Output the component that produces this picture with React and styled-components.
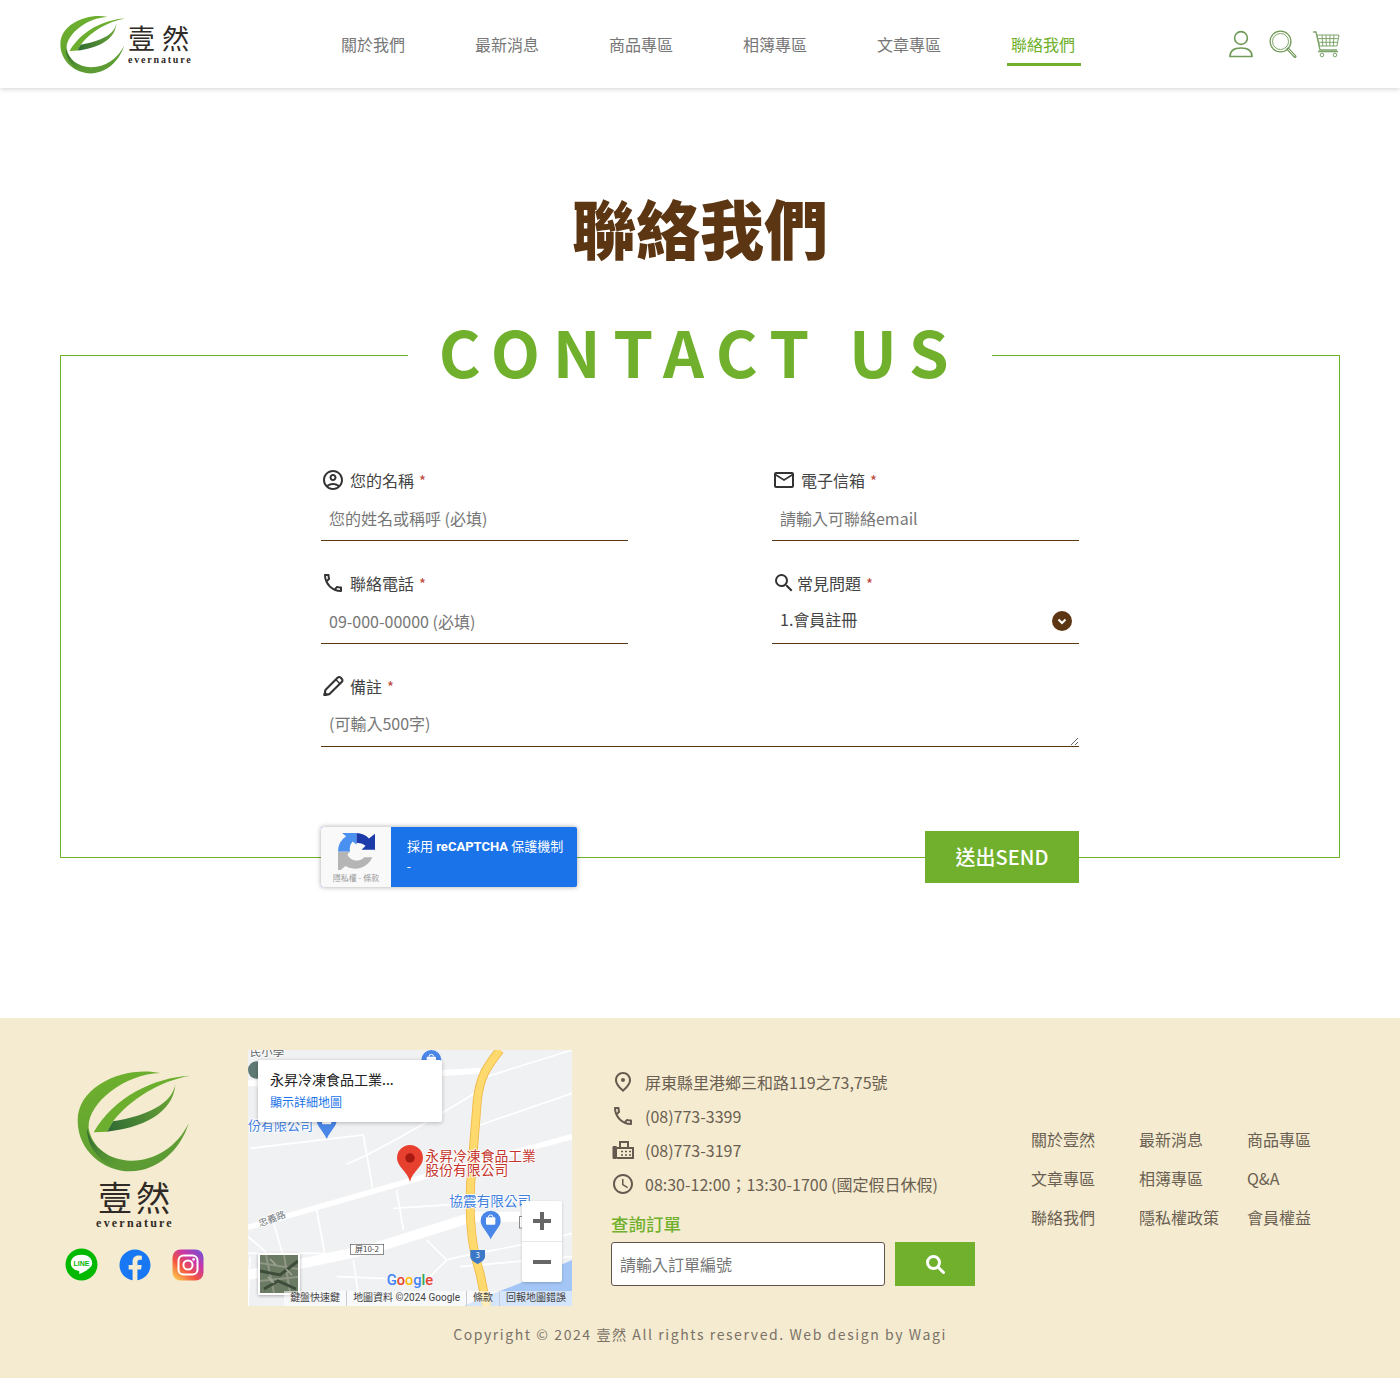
import React from 'react'
import styled, { createGlobalStyle } from 'styled-components'
import {
  MdOutlineAccountCircle,
  MdOutlineCall,
  MdMailOutline,
  MdSearch,
  MdOutlinePlace,
  MdAccessTime,
} from 'react-icons/md'
import { FaFacebook } from 'react-icons/fa'

const GlobalStyle = createGlobalStyle`
  * { box-sizing: border-box; }
  body {
    margin: 0;
    background: #fff;
    font-family: "Noto Sans CJK TC", "Noto Sans", sans-serif;
    color: #444;
  }
`

const green = '#70b02d'
const brown = '#5c3613'

/* ---------- logo ---------- */

const LeafSvg = styled.svg`
  display: block;
  flex: none;
`

const Leaf = ({ width, height, id }) => (
  <LeafSvg width={width} height={height} viewBox="110 88 345 306">
    <defs>
      <linearGradient id={`${id}a`} x1="140" y1="280" x2="270" y2="380" gradientUnits="userSpaceOnUse">
        <stop offset="0" stopColor="#2a6433" />
        <stop offset="1" stopColor="#5c9c35" stopOpacity="0" />
      </linearGradient>
      <linearGradient id={`${id}b`} x1="200" y1="260" x2="400" y2="170" gradientUnits="userSpaceOnUse">
        <stop offset="0" stopColor="#2f6b34" />
        <stop offset="1" stopColor="#6ba436" />
      </linearGradient>
      <linearGradient id={`${id}c`} x1="230" y1="90" x2="330" y2="390" gradientUnits="userSpaceOnUse">
        <stop offset="0" stopColor="#6eb02e" />
        <stop offset="1" stopColor="#5b9a34" />
      </linearGradient>
    </defs>
    <path fill={`url(#${id}c)`} d="M360 97C260 75 112 130 112 240C112 330 190 392 270 392C350 392 420 330 445 248C410 320 340 362 270 360C205 358 155 320 145 262C140 190 250 100 360 97Z" />
    <path fill={`url(#${id}a)`} d="M140 262C152 320 205 358 270 360L245 388C185 372 140 325 140 262Z" />
    <path fill="#6cae2d" d="M450 105C340 110 220 170 160 275L200 273L218 242C270 175 360 120 450 105Z" />
    <path fill={`url(#${id}b)`} d="M200 273C300 262 400 220 405 130C395 190 320 225 218 242Z" />
  </LeafSvg>
)

const HeaderLogo = styled.a`
  display: flex;
  align-items: center;
  width: 132px;
  margin-right: 145px;
  flex: none;
`

const LogoWords = styled.div`
  display: flex;
  flex-direction: column;
  align-items: flex-start;
  margin-left: 2px;
`

const LogoName = styled.div`
  margin-top: ${p => p.$top || 0}px;
  margin-left: ${p => p.$left || 0}px;
  font-size: ${p => p.$size}px;
  line-height: ${p => p.$size + 3}px;
  letter-spacing: ${p => p.$spacing}px;
  font-weight: 400;
  color: #2f2a26;
  white-space: nowrap;
`

const LogoLatin = styled.div`
  margin-top: ${p => p.$top || 0}px;
  margin-left: ${p => p.$left || 0}px;
  font-family: "Liberation Serif", serif;
  font-weight: 700;
  font-size: ${p => p.$size}px;
  line-height: ${p => p.$size + 1}px;
  letter-spacing: ${p => p.$spacing}px;
  color: #2f2a26;
  white-space: nowrap;
`

/* ---------- header ---------- */

const Header = styled.header`
  display: flex;
  align-items: center;
  height: 88px;
  padding: 0 60px;
  background: #fff;
  box-shadow: 0 1px 5px rgba(0, 0, 0, 0.18);
`

const Nav = styled.nav`
  display: flex;
  gap: 60px;
  align-self: stretch;
  align-items: flex-start;
  padding-top: 24px;
`

const NavItem = styled.a`
  display: block;
  height: 42px;
  padding: 7px 6px 0 4px;
  font-size: 16px;
  line-height: 26px;
  color: ${p => (p.$active ? green : '#777')};
  border-bottom: 3px solid ${p => (p.$active ? green : 'transparent')};
  white-space: nowrap;
`

const HeaderIcons = styled.div`
  display: flex;
  align-items: center;
  gap: 15px;
  margin-left: auto;
`

const UserIcon = () => (
  <svg width="26" height="28" viewBox="0 0 26 28" fill="none" stroke="#6f9a58" strokeWidth="1.6">
    <circle cx="13" cy="8" r="6.4" />
    <path d="M2 26.5C2 21 6 18 13 18S24 21 24 26.5Z" />
  </svg>
)

const LensIcon = () => (
  <svg width="28" height="28" viewBox="0 0 28 28" fill="none" stroke="#6f9a58">
    <circle cx="11.5" cy="11.5" r="10.4" strokeWidth="1.3" />
    <circle cx="11.5" cy="11.5" r="8" strokeWidth="0.9" />
    <path d="M19 19L26 26.5" strokeWidth="3" strokeLinecap="round" />
    <path d="M19.5 19.5L25.6 26" stroke="#fff" strokeWidth="1" strokeLinecap="round" />
  </svg>
)

const CartIcon = () => (
  <svg width="28" height="28" viewBox="0 0 28 28" fill="none" stroke="#7ea56b" strokeWidth="1">
    <path d="M1 2H4L8 20H25" strokeWidth="1.3" />
    <path d="M5 5H27L25 16H7.5Z" />
    <path d="M10 5L10.8 16M14 5L14.3 16M18 5L17.8 16M22 5L21.3 16M5.8 8.6H26.4M6.6 12.3H25.8" />
    <circle cx="10" cy="25" r="1.8" />
    <circle cx="23" cy="25" r="1.8" />
    <path d="M6 21.5H26" strokeWidth="1.6" />
  </svg>
)

/* ---------- contact ---------- */

const Main = styled.main`
  padding: 0 60px;
  height: 930px;
`

const Title = styled.h1`
  margin: 0;
  padding-top: 93px;
  height: 222px;
  text-align: center;
  font-size: 64px;
  line-height: 90px;
  font-weight: 900;
  color: ${brown};
`

const Frame = styled.fieldset`
  margin: 0;
  padding: 0;
  min-width: 0;
  border: 1px solid ${green};
`

const Legend = styled.legend`
  margin: 0 auto;
  padding: 0 31px;
  height: 90px;
  font-size: 64px;
  line-height: 80px;
  font-weight: 700;
  letter-spacing: 12.6px;
  color: ${green};
  white-space: nowrap;
`

const Form = styled.form`
  width: 758px;
  margin: 0 auto -30px;
  padding-top: 68px;
`

const Fields = styled.div`
  display: grid;
  grid-template-columns: 307px 307px;
  justify-content: space-between;
  row-gap: 30px;
`

const Field = styled.div`
  grid-column: ${p => (p.$wide ? '1 / -1' : 'auto')};
  position: relative;
`

const FieldLabel = styled.label`
  display: flex;
  align-items: center;
  height: 24px;
  gap: ${p => p.$gap}px;
  font-size: 16px;
  line-height: 24px;
  color: #444;
  svg { flex: none; color: #333; margin-top: -1px; }
`

const Required = styled.span`
  margin-left: 5px;
  font-size: 15px;
  color: #c0453a;
`

const controlStyle = `
  display: block;
  width: 100%;
  height: 43px;
  margin-top: 6px;
  padding: 8px 8px 10px;
  border: 0;
  border-bottom: 1px solid ${brown};
  border-radius: 0;
  outline: 0;
  background: transparent;
  font-family: inherit;
  font-size: 16px;
  line-height: 26px;
  color: #444;
  &::placeholder { color: #777; opacity: 1; }
`

const TextInput = styled.input`${controlStyle}`

const SelectInput = styled.select`
  ${controlStyle}
  padding: 5px 8px 12px;
  appearance: none;
`

const TextArea = styled.textarea`
  ${controlStyle}
  padding-top: 6px;
  resize: vertical;
`

const SelectArrow = styled.span`
  position: absolute;
  right: 7px;
  bottom: 13px;
  display: flex;
  align-items: center;
  justify-content: center;
  width: 20px;
  height: 20px;
  border-radius: 50%;
  background: ${brown};
  pointer-events: none;
`

const Actions = styled.div`
  display: flex;
  align-items: center;
  justify-content: space-between;
  margin-top: 80px;
`

const Recaptcha = styled.div`
  display: flex;
  width: 256px;
  height: 60px;
  border-radius: 2px;
  overflow: hidden;
  background: #1a73e8;
  box-shadow: 0 0 5px rgba(0, 0, 0, 0.35);
`

const RecaptchaLogo = styled.div`
  display: flex;
  flex-direction: column;
  align-items: center;
  width: 70px;
  padding-top: 6px;
  background: #f9f9f9;
`

const RecaptchaLinks = styled.div`
  margin-top: 3px;
  font-size: 8px;
  line-height: 10px;
  color: #9a9a9a;
  white-space: nowrap;
`

const RecaptchaText = styled.div`
  padding: 10px 0 0 16px;
  font-family: Roboto, "Noto Sans CJK TC", sans-serif;
  font-size: 13px;
  line-height: 20px;
  color: #fff;
  white-space: nowrap;
  b { font-weight: 700; }
`

const SendButton = styled.button`
  width: 154px;
  height: 52px;
  padding: 0 0 2px;
  border: 0;
  background: ${green};
  color: #fff;
  font-family: inherit;
  font-size: 20px;
  font-weight: 500;
`

/* ---------- footer ---------- */

const Footer = styled.footer`
  height: 360px;
  padding: 32px 60px 0;
  background: #f5ebd0;
`

const FooterRow = styled.div`
  display: flex;
  height: 256px;
`

const BrandColumn = styled.div`
  display: flex;
  flex-direction: column;
  align-items: center;
  width: 148px;
  margin-right: 40px;
  padding-top: 20px;
  flex: none;
`

const Socials = styled.div`
  display: flex;
  align-items: center;
  gap: 21px;
  margin-top: 18px;
`

const MapFrame = styled.div`
  position: relative;
  width: 324px;
  height: 256px;
  flex: none;
  overflow: hidden;
  background: #f0f1f3;
`

const MapCard = styled.div`
  position: absolute;
  left: 10px;
  top: 10px;
  width: 184px;
  height: 62px;
  padding: 8px 12px;
  border-radius: 2px;
  background: #fff;
  box-shadow: 0 1px 4px rgba(0, 0, 0, 0.25);
`

const MapCardTitle = styled.div`
  font-size: 14px;
  line-height: 22px;
  color: #222;
  white-space: nowrap;
`

const MapCardLink = styled.a`
  display: block;
  margin-top: 1px;
  font-size: 12px;
  line-height: 22px;
  color: #1a73e8;
`

const ZoomControl = styled.div`
  position: absolute;
  right: 10px;
  top: 151px;
  display: flex;
  flex-direction: column;
  width: 40px;
  height: 81px;
  border-radius: 2px;
  background: #fff;
  box-shadow: 0 1px 3px rgba(0, 0, 0, 0.2);
`

const ZoomButton = styled.div`
  flex: 1;
  display: flex;
  align-items: center;
  justify-content: center;
  & + & { border-top: 1px solid #e6e6e6; }
`

const Thumbnail = styled.div`
  position: absolute;
  left: 10px;
  bottom: 11px;
  width: 42px;
  height: 42px;
  border: 2px solid #fff;
  box-shadow: 0 1px 3px rgba(0, 0, 0, 0.3);
  line-height: 0;
`

const Attribution = styled.div`
  position: absolute;
  right: 0;
  bottom: 0;
  display: flex;
  height: 15px;
  font-family: Roboto, "Noto Sans CJK TC", sans-serif;
  font-size: 10px;
  line-height: 14px;
  color: #444;
  white-space: nowrap;
`

const AttributionItem = styled.span`
  padding: 0 6px;
  background: rgba(255, 255, 255, 0.55);
  & + & { border-left: 1px solid #c8ccd0; }
`

const InfoColumn = styled.div`
  width: 364px;
  margin-left: 39px;
  padding-top: 15px;
  flex: none;
`

const InfoLine = styled.div`
  display: flex;
  align-items: center;
  height: 34px;
  font-size: 16px;
  color: #6a5f52;
  white-space: nowrap;
  svg { flex: none; color: #655a4f; }
`

const InfoIcon = styled.span`
  display: flex;
  justify-content: center;
  width: 24px;
  margin-right: 10px;
`

const OrderTitle = styled.div`
  margin-top: 10px;
  font-size: 17.5px;
  line-height: 26px;
  font-weight: 500;
  color: ${green};
`

const OrderForm = styled.div`
  display: flex;
  gap: 10px;
  margin-top: 5px;
`

const OrderInput = styled.input`
  width: 274px;
  height: 44px;
  padding: 0 8px;
  border: 1px solid #5f554c;
  border-radius: 3px;
  outline: 0;
  background: #fff;
  font-family: inherit;
  font-size: 16px;
  &::placeholder { color: #777; opacity: 1; }
`

const OrderButton = styled.button`
  display: flex;
  align-items: center;
  justify-content: center;
  width: 80px;
  height: 44px;
  border: 0;
  background: ${green};
  color: #fff;
`

const FooterLinks = styled.div`
  display: grid;
  grid-template-columns: repeat(3, 108px);
  grid-auto-rows: 39px;
  align-content: center;
  margin-left: 56px;
  font-size: 16px;
  color: #6a5f52;
`

const FooterLink = styled.a`
  line-height: 39px;
  white-space: nowrap;
`

const Copyright = styled.div`
  margin-top: 17px;
  text-align: center;
  font-size: 14px;
  line-height: 22px;
  letter-spacing: 1.58px;
  color: #7a7268;
`

const navItems = ['關於我們', '最新消息', '商品專區', '相簿專區', '文章專區', '聯絡我們']
const footerLinks = ['關於壹然', '最新消息', '商品專區', '文章專區', '相簿專區', 'Q&A', '聯絡我們', '隱私權政策', '會員權益']

const PencilIcon = () => (
  <svg width="24" height="24" viewBox="0 0 24 24" fill="none" stroke="currentColor" strokeWidth="2.1" strokeLinejoin="round">
    <path d="M3.5 21L4.4 16L16.8 3.6A1.9 1.9 0 0 1 19.5 3.6L20.9 5A1.9 1.9 0 0 1 20.9 7.7L8.5 20.1Z" />
    <path d="M3.5 21L5.5 20.6L4 19Z" fill="currentColor" />
    <path d="M14.8 5.6L18.9 9.7" strokeWidth="1.4" />
  </svg>
)

const FaxIcon = () => (
  <svg width="22" height="20" viewBox="0 0 22 20" fill="none" stroke="currentColor" strokeWidth="2">
    <rect x="0.5" y="6" width="4.5" height="13" rx="1.2" fill="currentColor" stroke="none" />
    <path d="M5 8H21V18H5" />
    <path d="M8 8V2H16V8" />
    <path d="M9 11.5H11M13 11.5H15M17 11.5H19M9 15H11M13 15H15M17 15H19" strokeWidth="1.6" />
  </svg>
)

const BoldSearch = () => (
  <svg width="20" height="20" viewBox="0 0 20 20" fill="none" stroke="#fff" strokeWidth="3">
    <circle cx="8.5" cy="8.5" r="6" />
    <path d="M13 13L18.5 18.5" strokeLinecap="round" />
  </svg>
)

const LineIcon = () => (
  <svg width="33" height="33" viewBox="0 0 34 34">
    <circle cx="17" cy="17" r="16.5" fill="#00b900" />
    <path fill="#fff" d="M17 7C10.6 7 6 10.6 6 15.6C6 19.8 9.4 22.7 14.2 23.6C15 23.8 14.8 24.6 14.6 26C14.5 26.8 15.3 26.8 16 26.4C19 24.8 28 20.6 28 15.6C28 10.6 23.4 7 17 7Z" />
    <text x="17" y="18.6" textAnchor="middle" fontFamily="Liberation Sans, sans-serif" fontWeight="700" fontSize="7.2" fill="#00b900">LINE</text>
  </svg>
)

const InstagramIcon = () => (
  <svg width="32" height="32" viewBox="0 0 32 32">
    <defs>
      <linearGradient id="igGrad" x1="4" y1="30" x2="28" y2="2" gradientUnits="userSpaceOnUse">
        <stop offset="0" stopColor="#fdc34f" />
        <stop offset="0.35" stopColor="#f4533f" />
        <stop offset="0.7" stopColor="#c736a8" />
        <stop offset="1" stopColor="#7a4fd0" />
      </linearGradient>
    </defs>
    <rect x="0.5" y="0.5" width="31" height="31" rx="8" fill="url(#igGrad)" />
    <rect x="6.5" y="6.5" width="19" height="19" rx="5" fill="none" stroke="#fff" strokeWidth="2" />
    <circle cx="16" cy="16" r="4.6" fill="none" stroke="#fff" strokeWidth="2" />
    <circle cx="21.6" cy="10.4" r="1.3" fill="#fff" />
  </svg>
)

const RecaptchaMark = () => (
  <svg width="37" height="37" viewBox="0 0 110 110">
    <path fill="#b5b5b5" d="M0 55H36L28 64A30 30 0 0 0 78 72L102 72A55 55 0 0 1 22 98L8 110H0Z" />
    <path fill="#4a90f0" d="M0 55A55 55 0 0 1 24 10L12 0H55V35L44 25A32 32 0 0 0 36 55Z" />
    <path fill="#1c3aa9" d="M55 0A55 55 0 0 1 92 16L110 2V50H70L82 38A32 32 0 0 0 55 30Z" />
  </svg>
)

const MapLabel = styled.text`
  paint-order: stroke;
  stroke: #fff;
  stroke-width: 5px;
  stroke-linejoin: round;
`

const Poi = ({ x, y }) => (
  <g transform={`translate(${x} ${y})`}>
    <path d="M0 0a30 30 0 0 1 30 30c0 18-18 30-30 56c-12-26-30-38-30-56a30 30 0 0 1 30-30Z" fill="#4a86e8" />
    <rect x="-14" y="20" width="28" height="22" rx="3" fill="#fff" />
    <path d="M-7 20a7 7 0 0 1 14 0" fill="none" stroke="#fff" strokeWidth="3" />
  </g>
)

const MapDrawing = () => (
  <svg width="324" height="256" viewBox="24 30 972 768" fontFamily="Noto Sans CJK TC, sans-serif">
    <rect x="24" y="30" width="972" height="768" fill="#f0f1f3" />
    <g fill="none" stroke="#fff" strokeWidth="5">
      <path d="M30 325L370 285L398 445M230 510L255 645M470 450L490 570M460 505L690 490M100 545L130 650M24 640L250 640" />
      <path d="M320 372C380 350 560 250 720 150M720 255L996 160M560 600L620 660L560 720L290 710M340 660L360 800M620 660C680 640 850 620 996 580M660 680L996 650" />
      <path d="M24 590L60 620L100 660M30 650L24 798M740 110L996 30" />
    </g>
    <path d="M24 130H60L720 92" fill="none" stroke="#fff" strokeWidth="18" />
    <path d="M24 562L500 425L996 290" fill="none" stroke="#fff" strokeWidth="16" />
    <path d="M24 705L400 625L700 530H840" fill="none" stroke="#fff" strokeWidth="30" />
    <path d="M996 660L850 725L670 798H996Z" fill="#a3c6f6" />
    <path d="M780 30C740 80 720 110 712 180L692 430C685 560 700 640 720 700L740 798" fill="none" stroke="#f2b846" strokeWidth="27" />
    <path d="M780 30C740 80 720 110 712 180L692 430C685 560 700 640 720 700L740 798" fill="none" stroke="#fdd96e" strokeWidth="22" />
    <MapLabel x="30" y="48" fontSize="34" fill="#5f6368">民小學</MapLabel>
    <circle cx="50" cy="90" r="26" fill="#5f7a74" />
    <Poi x={574} y={30} />
    <MapLabel x="24" y="270" fontSize="39" fill="#3f7fe0">份有限公司</MapLabel>
    <Poi x={260} y={211} />
    <path d="M510 315a39 39 0 0 1 39 39c0 26-30 38-39 71c-9-33-39-45-39-71a39 39 0 0 1 39-39Z" fill="#e8402f" />
    <circle cx="510" cy="354" r="14" fill="#a61a12" />
    <MapLabel x="556" y="364" fontSize="41.5" fill="#c5352d">永昇冷凍食品工業</MapLabel>
    <MapLabel x="556" y="405" fontSize="41.5" fill="#c5352d">股份有限公司</MapLabel>
    <MapLabel x="628" y="498" fontSize="41" fill="#3f7fe0">協震有限公司</MapLabel>
    <Poi x={752} y={512} />
    <rect x="838" y="530" width="20" height="34" fill="#fff" stroke="#555" strokeWidth="2" />
    <MapLabel x="60" y="560" fontSize="28" fill="#70757a" transform="rotate(-20 60 560)">忠義路</MapLabel>
    <rect x="331" y="613" width="100" height="30" fill="#fff" stroke="#555" strokeWidth="2" />
    <text x="381" y="637" fontSize="24" textAnchor="middle" fill="#444">屏10-2</text>
    <path d="M691 630H735V650C735 660 720 668 713 672C706 668 691 660 691 650Z" fill="#3b78c8" />
    <text x="713" y="654" fontSize="22" textAnchor="middle" fill="#fff">3</text>
    <text x="440" y="734" fontSize="44" fontFamily="Roboto, sans-serif" fontWeight="500">
      <tspan fill="#4285f4">G</tspan>
      <tspan fill="#ea4335">o</tspan>
      <tspan fill="#fbbc05">o</tspan>
      <tspan fill="#4285f4">g</tspan>
      <tspan fill="#34a853">l</tspan>
      <tspan fill="#ea4335">e</tspan>
    </text>
  </svg>
)

const ThumbImage = () => (
  <svg width="38" height="38" viewBox="0 0 38 38">
    <rect width="38" height="38" fill="#6b7a62" />
    <path d="M0 8L38 14M6 0L14 38M24 0L30 38M0 26L38 22" stroke="#8f9686" strokeWidth="2" />
    <path d="M0 16L20 20L38 6M4 34L18 26L36 34" stroke="#3e4d3b" strokeWidth="3" fill="none" />
    <path d="M10 4L16 10M26 14L32 20M8 22L14 28" stroke="#a4a896" strokeWidth="1.5" />
  </svg>
)

export default function App() {
  return (
    <>
      <GlobalStyle />
      <Header>
        <HeaderLogo>
          <Leaf id="head" width={66} height={59} />
          <LogoWords>
            <LogoName $size={27} $spacing={7}>壹然</LogoName>
            <LogoLatin $size={10} $spacing={1.8} $top={1}>evernature</LogoLatin>
          </LogoWords>
        </HeaderLogo>
        <Nav>
          {navItems.map((item, i) => (
            <NavItem key={item} $active={i === navItems.length - 1}>{item}</NavItem>
          ))}
        </Nav>
        <HeaderIcons>
          <UserIcon />
          <LensIcon />
          <CartIcon />
        </HeaderIcons>
      </Header>

      <Main>
        <Title>聯絡我們</Title>
        <Frame>
          <Legend>CONTACT US</Legend>
          <Form>
            <Fields>
              <Field>
                <FieldLabel $gap={5}><MdOutlineAccountCircle size={24} /><span>您的名稱<Required>*</Required></span></FieldLabel>
                <TextInput placeholder="您的姓名或稱呼 (必填)" />
              </Field>
              <Field>
                <FieldLabel $gap={5}><MdMailOutline size={24} /><span>電子信箱<Required>*</Required></span></FieldLabel>
                <TextInput placeholder="請輸入可聯絡email" />
              </Field>
              <Field>
                <FieldLabel $gap={5}><MdOutlineCall size={24} /><span>聯絡電話<Required>*</Required></span></FieldLabel>
                <TextInput placeholder="09-000-00000 (必填)" />
              </Field>
              <Field>
                <FieldLabel $gap={1}><MdSearch size={24} /><span>常見問題<Required>*</Required></span></FieldLabel>
                <SelectInput defaultValue="1">
                  <option value="1">1.會員註冊</option>
                </SelectInput>
                <SelectArrow>
                  <svg width="12" height="12" viewBox="0 0 12 12" fill="none" stroke="#fff" strokeWidth="2">
                    <path d="M2.5 4.5L6 8L9.5 4.5" />
                  </svg>
                </SelectArrow>
              </Field>
              <Field $wide>
                <FieldLabel $gap={5}><PencilIcon /><span>備註<Required>*</Required></span></FieldLabel>
                <TextArea placeholder="(可輸入500字)" />
              </Field>
            </Fields>
            <Actions>
              <Recaptcha>
                <RecaptchaLogo>
                  <RecaptchaMark />
                  <RecaptchaLinks>隱私權 - 條款</RecaptchaLinks>
                </RecaptchaLogo>
                <RecaptchaText>
                  採用 <b>reCAPTCHA</b> 保護機制
                  <br />-
                </RecaptchaText>
              </Recaptcha>
              <SendButton type="button">送出SEND</SendButton>
            </Actions>
          </Form>
        </Frame>
      </Main>

      <Footer>
        <FooterRow>
          <BrandColumn>
            <Leaf id="foot" width={115} height={102} />
            <LogoName $size={34} $spacing={4} $top={6} $left={4}>壹然</LogoName>
            <LogoLatin $size={12} $spacing={2.2} $top={2} $left={2}>evernature</LogoLatin>
            <Socials>
              <LineIcon />
              <FaFacebook size={32} color="#1877f2" />
              <InstagramIcon />
            </Socials>
          </BrandColumn>

          <MapFrame>
            <MapDrawing />
            <MapCard>
              <MapCardTitle>永昇冷凍食品工業...</MapCardTitle>
              <MapCardLink>顯示詳細地圖</MapCardLink>
            </MapCard>
            <ZoomControl>
              <ZoomButton>
                <svg width="20" height="20" viewBox="0 0 20 20" fill="#666"><path d="M8 1H12V8H19V12H12V19H8V12H1V8H8Z" /></svg>
              </ZoomButton>
              <ZoomButton>
                <svg width="20" height="20" viewBox="0 0 20 20" fill="#666"><path d="M1 8H19V12H1Z" /></svg>
              </ZoomButton>
            </ZoomControl>
            <Thumbnail><ThumbImage /></Thumbnail>
            <Attribution>
              <AttributionItem>鍵盤快速鍵</AttributionItem>
              <AttributionItem>地圖資料 ©2024 Google</AttributionItem>
              <AttributionItem>條款</AttributionItem>
              <AttributionItem>回報地圖錯誤</AttributionItem>
            </Attribution>
          </MapFrame>

          <InfoColumn>
            <InfoLine><InfoIcon><MdOutlinePlace size={24} /></InfoIcon>屏東縣里港鄉三和路119之73,75號</InfoLine>
            <InfoLine><InfoIcon><MdOutlineCall size={24} /></InfoIcon>(08)773-3399</InfoLine>
            <InfoLine><InfoIcon><FaxIcon /></InfoIcon>(08)773-3197</InfoLine>
            <InfoLine><InfoIcon><MdAccessTime size={24} /></InfoIcon>08:30-12:00；13:30-1700 (國定假日休假)</InfoLine>
            <OrderTitle>查詢訂單</OrderTitle>
            <OrderForm>
              <OrderInput placeholder="請輸入訂單編號" />
              <OrderButton type="button"><BoldSearch /></OrderButton>
            </OrderForm>
          </InfoColumn>

          <FooterLinks>
            {footerLinks.map(link => <FooterLink key={link}>{link}</FooterLink>)}
          </FooterLinks>
        </FooterRow>
        <Copyright>Copyright © 2024 壹然 All rights reserved. Web design by Wagi</Copyright>
      </Footer>
    </>
  )
}
